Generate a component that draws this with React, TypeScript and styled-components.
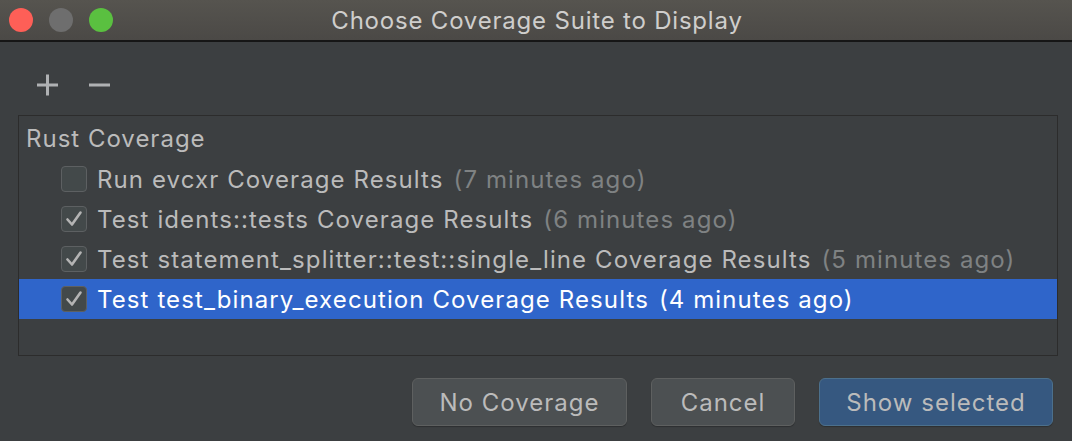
import * as React from "react";
import styled, { createGlobalStyle } from "styled-components";

interface Suite {
  name: string;
  ago: string;
  checked: boolean;
  selected?: boolean;
}

const suites: Suite[] = [
  { name: "Run evcxr Coverage Results", ago: "(7 minutes ago)", checked: false },
  { name: "Test idents::tests Coverage Results", ago: "(6 minutes ago)", checked: true },
  {
    name: "Test statement_splitter::test::single_line Coverage Results",
    ago: "(5 minutes ago)",
    checked: true,
  },
  {
    name: "Test test_binary_execution Coverage Results",
    ago: "(4 minutes ago)",
    checked: true,
    selected: true,
  },
];

const CheckBox = ({ checked }: { checked: boolean }) => (
  <Box>
    {checked && (
      <svg width="20" height="20" viewBox="0 0 20 20">
        <path
          d="M3.5 10.5 L8 15.5 L16.5 3.5"
          fill="none"
          stroke="#b4b4b4"
          strokeWidth="2.6"
          strokeLinecap="round"
          strokeLinejoin="round"
        />
      </svg>
    )}
  </Box>
);

export default function App() {
  return (
    <>
      <GlobalStyle />
      <Window>
        <TitleBar>
          <Lights>
            <Light color="#fe5f57" />
            <Light color="#6e6e6e" />
            <Light color="#5ac040" />
          </Lights>
          <Title>Choose Coverage Suite to Display</Title>
        </TitleBar>
        <Body>
          <Toolbar>
            <ToolIcon>
              <svg width="22" height="22" viewBox="0 0 22 22">
                <rect x="0" y="9.5" width="21" height="3" fill="#afb1b3" />
                <rect x="9" y="0.5" width="3" height="21" fill="#afb1b3" />
              </svg>
            </ToolIcon>
            <ToolIcon>
              <svg width="22" height="22" viewBox="0 0 22 22">
                <rect x="0" y="9.5" width="21" height="3" fill="#afb1b3" />
              </svg>
            </ToolIcon>
          </Toolbar>
          <Tree>
            <GroupRow>Rust Coverage</GroupRow>
            {suites.map((s) => (
              <ItemRow key={s.name} $selected={!!s.selected}>
                <CheckBox checked={s.checked} />
                <Name>{s.name}</Name>
                <Ago $selected={!!s.selected}>{s.ago}</Ago>
              </ItemRow>
            ))}
          </Tree>
          <Footer>
            <Button>No Coverage</Button>
            <Button $w={144}>Cancel</Button>
            <Button $w={234} $primary>
              Show selected
            </Button>
          </Footer>
        </Body>
      </Window>
    </>
  );
}

//////////
// Style
//////////
const GlobalStyle = createGlobalStyle`
  html, body {
    margin: 0;
    padding: 0;
    background: #3c3f41;
  }
  body {
    font-family: Inter, "Open Sans", sans-serif;
  }
`;

const Window = styled.div`
  width: 1072px;
  height: 441px;
  display: flex;
  flex-direction: column;
  background: #3c3f41;
  overflow: hidden;
`;

const TitleBar = styled.div`
  height: 40px;
  flex-shrink: 0;
  position: relative;
  display: flex;
  align-items: center;
  justify-content: center;
  background: linear-gradient(#56544f, #4b4946);
  border-bottom: 2px solid #161616;
`;

const Lights = styled.div`
  position: absolute;
  left: 9px;
  top: 8px;
  display: flex;
  gap: 16px;
`;

const Light = styled.div<{ color: string }>`
  width: 24px;
  height: 24px;
  border-radius: 50%;
  background: ${(p) => p.color};
`;

const Title = styled.div`
  color: #cfcecc;
  font-size: 24px;
  letter-spacing: 0.8px;
  padding-left: 2px;
`;

const Body = styled.div`
  flex: 1;
  display: flex;
  flex-direction: column;
  padding: 0 14px 0 18px;
`;

const Toolbar = styled.div`
  height: 73px;
  display: flex;
  align-items: center;
  gap: 30px;
  padding: 12px 0 0 19px;
  box-sizing: border-box;
`;

const ToolIcon = styled.div`
  width: 22px;
  height: 22px;
  display: flex;
`;

const Tree = styled.div`
  height: 241px;
  box-sizing: border-box;
  border: 1px solid #2c2c2c;
  padding-top: 2px;
  display: flex;
  flex-direction: column;
`;

const GroupRow = styled.div`
  height: 41px;
  display: flex;
  align-items: center;
  padding-left: 7px;
  color: #bbbbbb;
  font-size: 24px;
  letter-spacing: 1px;
`;

const ItemRow = styled.div<{ $selected: boolean }>`
  height: 40px;
  display: flex;
  align-items: center;
  padding-left: 42px;
  font-size: 24px;
  letter-spacing: 1.1px;
  white-space: nowrap;
  background: ${(p) => (p.$selected ? "#2f65ca" : "transparent")};
  color: ${(p) => (p.$selected ? "#ffffff" : "#bbbbbb")};
`;

const Box = styled.div`
  width: 26px;
  height: 26px;
  box-sizing: border-box;
  border: 1.5px solid #5d6062;
  border-radius: 4px;
  background: #43494a;
  display: flex;
  align-items: center;
  justify-content: center;
  margin-right: 10px;
`;

const Name = styled.span`
  margin-right: 10px;
`;

const Ago = styled.span<{ $selected: boolean }>`
  color: ${(p) => (p.$selected ? "#ffffff" : "#7f8283")};
`;

const Footer = styled.div`
  flex: 1;
  display: flex;
  justify-content: flex-end;
  align-items: flex-start;
  padding: 22px 5px 0 0;
  gap: 24px;
`;

const Button = styled.button<{ $w?: number; $primary?: boolean }>`
  width: ${(p) => p.$w ?? 215}px;
  height: 48px;
  border-radius: 6px;
  font-family: Inter, "Open Sans", sans-serif;
  font-size: 24px;
  letter-spacing: 1px;
  color: #bbbbbb;
  background: ${(p) => (p.$primary ? "#365880" : "#4c5052")};
  border: 1.5px solid ${(p) => (p.$primary ? "#4c708c" : "#5e6060")};
  box-shadow: 0 1px 1px rgba(0, 0, 0, 0.25);
`;
